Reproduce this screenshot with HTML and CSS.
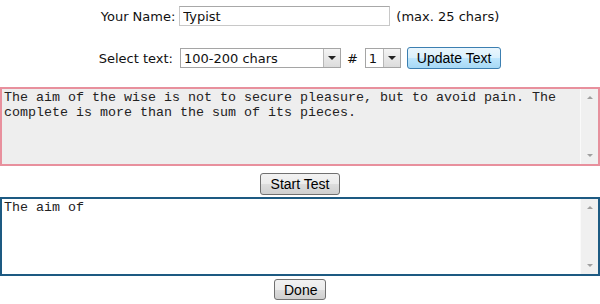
FILE: index.html
```html
<!DOCTYPE html>
<html lang="en">
<head>
    <meta charset="UTF-8">
    <title>Typing Test</title>
    <link rel="stylesheet" href="styles.css">
</head>
<body>
    <div class="row name-row">
        <label for="name">Your Name:</label>
        <input type="text" id="name" class="name-input" value="Typist">
        <span class="hint">(max. 25 chars)</span>
    </div>

    <div class="row select-row">
        <label for="len">Select text:</label>
        <span class="select-wrap len-select">
            <select id="len"><option>100-200 chars</option></select>
            <span class="select-btn"></span>
        </span>
        <span class="hash">#</span>
        <span class="select-wrap num-select">
            <select><option>1</option></select>
            <span class="select-btn"></span>
        </span>
        <button class="btn btn-focus">Update Text</button>
    </div>

    <div class="box box-source">
        <textarea readonly>The aim of the wise is not to secure pleasure, but to avoid pain. The complete is more than the sum of its pieces.</textarea>
        <div class="scroll"><span class="arrow up"></span><span class="arrow down"></span></div>
    </div>

    <div class="row start-row">
        <button class="btn start">Start Test</button>
    </div>

    <div class="box box-typed">
        <textarea>The aim of</textarea>
        <div class="scroll"><span class="arrow up"></span><span class="arrow down"></span></div>
    </div>

    <div class="row done-row">
        <button class="btn done">Done</button>
    </div>
</body>
</html>
```

FILE: styles.css
```css
body {
    margin: 0;
    background-color: #fff;
    color: #111;
    font-family: "DejaVu Sans", Verdana, sans-serif;
    font-size: 13px;
}
.row {
    display: flex;
    justify-content: center;
    align-items: center;
}
.name-row {
    padding-top: 6px;
    height: 20px;
}
.name-row label {
    margin-right: 4px;
}
.name-input {
    box-sizing: border-box;
    width: 211px;
    height: 20px;
    border: 1px solid #c8c8c8;
    border-top-color: #a8a8a8;
    padding: 1px 3px;
    font-family: "DejaVu Sans", Verdana, sans-serif;
    font-size: 13px;
    color: #111;
}
.hint {
    margin-left: 6px;
}
.select-row {
    margin-top: 22px;
    height: 20px;
}
.select-row label {
    margin-right: 7px;
}
.select-wrap {
    display: inline-flex;
    box-sizing: border-box;
    height: 20px;
    border: 1px solid #a5a5a5;
    background: #fff;
}
.select-wrap select {
    appearance: none;
    -webkit-appearance: none;
    border: 0;
    outline: 0;
    background: transparent;
    flex: 1;
    padding: 0 3px;
    font-family: "DejaVu Sans", Verdana, sans-serif;
    font-size: 13px;
    color: #111;
}
.len-select {
    width: 161px;
}
.num-select {
    width: 36px;
}
.select-btn {
    width: 16px;
    border-left: 1px solid #b8b8b8;
    background: linear-gradient(#f4f4f4, #dcdcdc);
    display: flex;
    align-items: center;
    justify-content: center;
}
.select-btn::after {
    content: "";
    border-left: 4px solid transparent;
    border-right: 4px solid transparent;
    border-top: 4px solid #222;
}
.hash {
    margin: 0 7px 0 6px;
}
.btn {
    box-sizing: border-box;
    height: 22px;
    padding: 0 9px;
    border: 1px solid #707070;
    border-radius: 3px;
    background: linear-gradient(#f2f2f2 0%, #ebebeb 50%, #dddddd 51%, #cfcfcf 100%);
    font-family: "Liberation Sans", Arial, sans-serif;
    font-size: 14px;
    color: #000;
}
.btn-focus {
    margin-left: 6px;
    border-color: #3c7fb1;
    background: linear-gradient(#eaf6fd 0%, #d9f0fc 50%, #bee6fd 51%, #a7d9f5 100%);
}
.box {
    display: flex;
    box-sizing: border-box;
    height: 79px;
    border: 2px solid;
}
.box-source {
    margin-top: 19px;
    border-color: #e8909d;
    background: #eeeeee;
}
.box-typed {
    margin-top: 2px;
    border-color: #1d5a82;
    background: #fff;
}
.box textarea {
    flex: 1;
    border: 0;
    outline: 0;
    resize: none;
    overflow: hidden;
    background: transparent;
    padding: 1px 2px;
    font-family: "Liberation Mono", "Courier New", monospace;
    font-size: 13.33px;
    line-height: 15px;
    color: #222;
}
.scroll {
    width: 17px;
    display: flex;
    flex-direction: column;
    justify-content: space-between;
    align-items: center;
    padding: 7px 0;
    background: #f0f0f0;
    border-left: 1px solid #fafafa;
}
.arrow {
    width: 0;
    border-left: 3px solid transparent;
    border-right: 3px solid transparent;
}
.arrow.up {
    border-bottom: 3px solid #a0a0a0;
}
.arrow.down {
    border-top: 3px solid #a0a0a0;
}
.start-row {
    margin-top: 7px;
}
.start {
    width: 80px;
}
.done-row {
    margin-top: 3px;
}
.done {
    width: 52px;
    height: 21px;
}
```
